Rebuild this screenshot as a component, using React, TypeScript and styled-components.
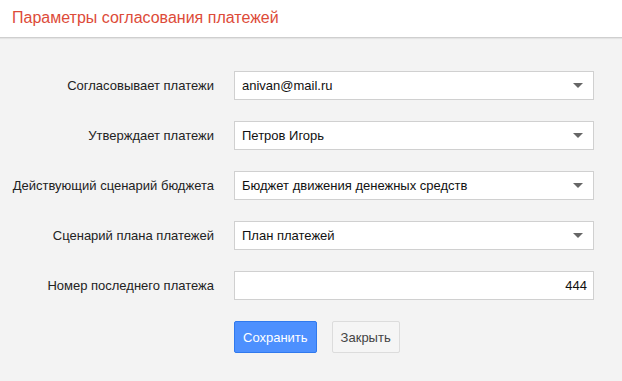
import React from "react";
import styled, { createGlobalStyle } from "styled-components";

const Global = createGlobalStyle`
  html, body { margin: 0; padding: 0; background: #f3f3f3; }
  body { font-family: "Liberation Sans", Arial, sans-serif; }
  * { box-sizing: border-box; }
`;

const Page = styled.div`
  width: 622px;
  height: 381px;
  background: #f3f3f3;
  overflow: hidden;
`;

const Header = styled.header`
  height: 38px;
  background: #fff;
  border-bottom: 1px solid #cfcfcf;
  box-shadow: 0 1px 1px rgba(0, 0, 0, 0.06);
  display: flex;
  align-items: center;
  padding: 0 12px 2px;
`;

const Title = styled.h1`
  margin: 0;
  font-size: 16px;
  font-weight: normal;
  color: #dd4b39;
`;

const Form = styled.div`
  display: grid;
  grid-template-columns: 214px 360px;
  column-gap: 20px;
  row-gap: 21px;
  padding-top: 33px;
`;

const Label = styled.label`
  display: flex;
  align-items: center;
  justify-content: flex-end;
  height: 29px;
  font-size: 13px;
  color: #222;
  white-space: nowrap;
`;

const Field = styled.div<{ $align?: "left" | "right" }>`
  position: relative;
  height: 29px;
  background: #fff;
  border: 1px solid #d0d0d0;
  display: flex;
  align-items: center;
  justify-content: ${(p) => (p.$align === "right" ? "flex-end" : "flex-start")};
  padding: 0 ${(p) => (p.$align === "right" ? "6px" : "30px")} 0 7px;
  font-size: 13px;
  color: #111;
`;

const Arrow = styled.span`
  position: absolute;
  right: 10px;
  top: 11px;
  width: 0;
  height: 0;
  border-left: 5px solid transparent;
  border-right: 5px solid transparent;
  border-top: 5px solid #666;
`;

const Actions = styled.div`
  grid-column: 2;
  display: flex;
  gap: 15px;
`;

const Button = styled.button<{ $primary?: boolean }>`
  height: 32px;
  padding: 0 ${(p) => (p.$primary ? "8px" : "8px")};
  font-family: inherit;
  font-size: 13px;
  border-radius: 2px;
  cursor: pointer;
  border: 1px solid ${(p) => (p.$primary ? "#3079ed" : "#dcdcdc")};
  background: ${(p) => (p.$primary ? "#4d90fe" : "#f5f5f5")};
  color: ${(p) => (p.$primary ? "#fff" : "#444")};
`;

const rows: { label: string; value: string; select: boolean }[] = [
  { label: "Согласовывает платежи", value: "anivan@mail.ru", select: true },
  { label: "Утверждает платежи", value: "Петров Игорь", select: true },
  { label: "Действующий сценарий бюджета", value: "Бюджет движения денежных средств", select: true },
  { label: "Сценарий плана платежей", value: "План платежей", select: true },
  { label: "Номер последнего платежа", value: "444", select: false },
];

export default function App() {
  return (
    <Page>
      <Global />
      <Header>
        <Title>Параметры согласования платежей</Title>
      </Header>
      <Form>
        {rows.map((r) => (
          <React.Fragment key={r.label}>
            <Label>{r.label}</Label>
            <Field $align={r.select ? "left" : "right"}>
              {r.value}
              {r.select && <Arrow />}
            </Field>
          </React.Fragment>
        ))}
        <Actions>
          <Button $primary>Сохранить</Button>
          <Button>Закрыть</Button>
        </Actions>
      </Form>
    </Page>
  );
}
